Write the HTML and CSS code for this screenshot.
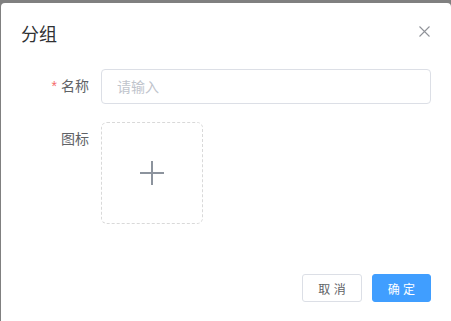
FILE: index.html
```html
<!DOCTYPE html>
<html lang="zh-CN">
<head>
  <meta charset="UTF-8">
  <meta name="viewport" content="width=device-width, initial-scale=1.0">
  <title>分组</title>
  <link rel="stylesheet" href="styles.css">
</head>
<body>

  <div class="dialog">
    <div class="dialog-header">
      <span class="dialog-title">分组</span>
      <button class="dialog-close" aria-label="关闭">
        <svg width="11" height="11" viewBox="0 0 11 11">
          <path d="M0.5 0.5 L10.5 10.5 M10.5 0.5 L0.5 10.5" stroke="#909399" stroke-width="1.1" fill="none"/>
        </svg>
      </button>
    </div>

    <div class="dialog-body">
      <div class="form-item">
        <label class="form-label required">名称</label>
        <div class="form-content">
          <input class="input" type="text" placeholder="请输入">
        </div>
      </div>

      <div class="form-item">
        <label class="form-label">图标</label>
        <div class="form-content">
          <div class="uploader">
            <svg width="26" height="26" viewBox="0 0 26 26">
              <path d="M13 1 V25 M1 13 H25" stroke="#8c939d" stroke-width="2" fill="none"/>
            </svg>
          </div>
        </div>
      </div>
    </div>

    <div class="dialog-footer">
      <button class="btn">取 消</button>
      <button class="btn btn-primary">确 定</button>
    </div>
  </div>

</body>
</html>
```

FILE: styles.css
```css
html, body {
  height: 100%;
}

body {
  margin: 0;
  background: #808080;
  font-family: "Helvetica Neue", "Liberation Sans", "Noto Sans CJK SC", sans-serif;
  overflow: hidden;
}

.dialog {
  margin: 3px 0 0 1px;
  width: 450px;
  height: calc(100vh - 3px);
  background: #fff;
  border-radius: 4px 4px 0 0;
  box-sizing: border-box;
}

.dialog-header {
  display: flex;
  justify-content: space-between;
  align-items: flex-start;
  padding: 20px 20px 10px;
}

.dialog-title {
  font-size: 18px;
  line-height: 24px;
  color: #303133;
}

.dialog-close {
  border: none;
  background: none;
  padding: 0;
  margin-top: 3px;
  margin-right: 1px;
  cursor: pointer;
  line-height: 0;
}

.dialog-body {
  padding: 12px 20px 0;
}

.form-item {
  display: flex;
  margin-bottom: 18px;
}

.form-label {
  width: 80px;
  box-sizing: border-box;
  padding-right: 12px;
  text-align: right;
  font-size: 14px;
  line-height: 35px;
  color: #606266;
}

.form-label.required::before {
  content: "*";
  color: #f56c6c;
  margin-right: 4px;
}

.form-content {
  flex: 1;
}

.input {
  display: block;
  width: 100%;
  height: 35px;
  box-sizing: border-box;
  border: 1px solid #dcdfe6;
  border-radius: 4px;
  padding: 0 15px;
  font-family: inherit;
  font-size: 14px;
  color: #606266;
  outline: none;
}

.input::placeholder {
  color: #c0c4cc;
}

.uploader {
  width: 102px;
  height: 102px;
  box-sizing: border-box;
  border: 1px dashed #d9d9d9;
  border-radius: 6px;
  display: flex;
  align-items: center;
  justify-content: center;
}

.dialog-footer {
  display: flex;
  justify-content: flex-end;
  gap: 10px;
  padding: 32px 20px 20px;
}

.btn {
  height: 28px;
  padding: 0 15px;
  font-family: inherit;
  font-size: 12px;
  color: #606266;
  background: #fff;
  border: 1px solid #dcdfe6;
  border-radius: 3px;
  cursor: pointer;
}

.btn-primary {
  color: #fff;
  background: #409eff;
  border-color: #409eff;
}
```
